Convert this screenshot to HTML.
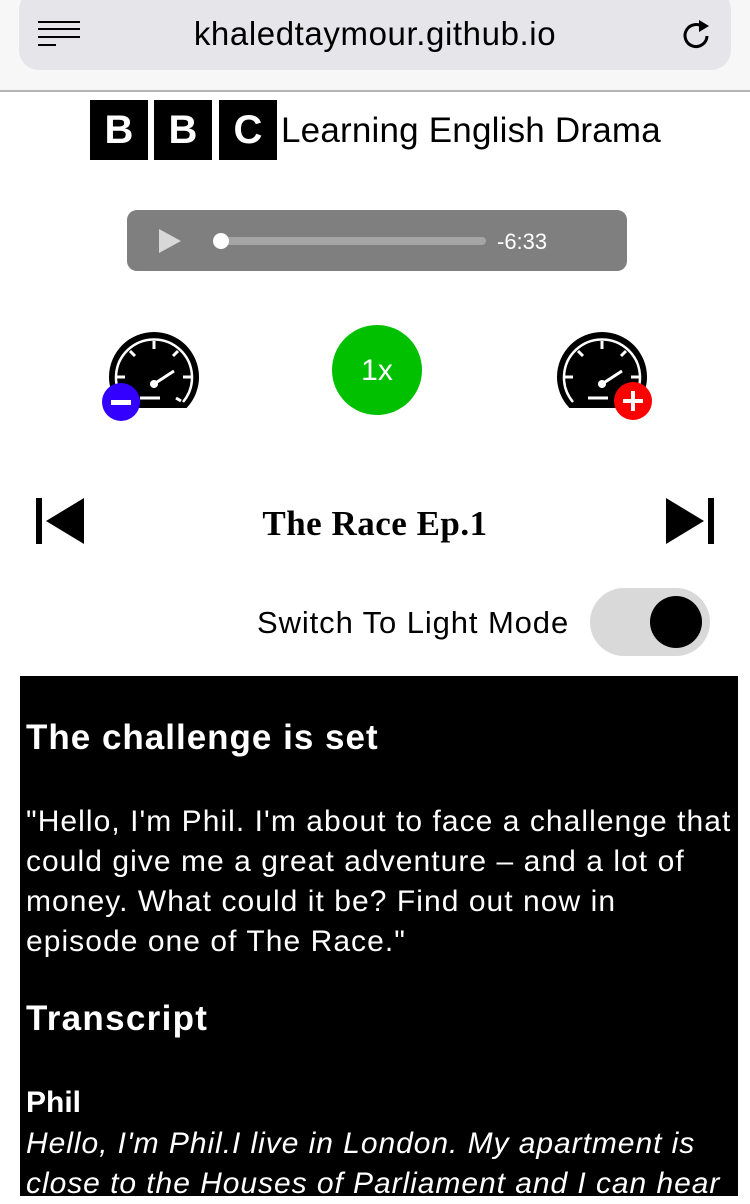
<!DOCTYPE html>
<html><head><meta charset="utf-8"><style>
body{margin:0;width:750px;height:1194px;overflow:hidden;background:#fff;font-family:"Liberation Sans",sans-serif;position:relative}
.a{position:absolute}
.bbc{background:#000;color:#fff;width:58px;height:60px;top:100px;font-size:40px;font-weight:bold;text-align:center;line-height:60px}
</style></head><body>
<div class="a" style="left:0;top:0;width:750px;height:90px;background:#f7f7f7;border-bottom:2px solid #b5b5b5"></div>
<div class="a" style="left:19px;top:-10px;width:712px;height:80px;background:#e5e5ea;border-radius:20px"></div>
<div class="a" style="left:38px;top:21px;width:42px;height:2px;background:#000;box-shadow:0 7px 0 #000,0 15px 0 #000"></div>
<div class="a" style="left:38px;top:44px;width:18px;height:2px;background:#000"></div>
<div class="a" style="left:0;width:750px;top:15px;text-align:center;font-size:33px;letter-spacing:0.6px;color:#000">khaledtaymour.github.io</div>
<svg class="a" style="left:680px;top:16px" width="34" height="36" viewBox="0 0 34 36"><path d="M24 12 A11 11 0 1 0 27 20" fill="none" stroke="#000" stroke-width="3"/><path d="M19 4 L29 10 L19 16Z" fill="#000"/></svg>
<div class="a bbc" style="left:90px">B</div>
<div class="a bbc" style="left:154px">B</div>
<div class="a bbc" style="left:219px">C</div>
<div class="a" style="left:281px;top:111px;font-size:35px;color:#000;letter-spacing:0.2px">Learning English Drama</div>
<div class="a" style="left:127px;top:210px;width:500px;height:61px;background:#7f7f7f;border-radius:10px"></div>
<svg class="a" style="left:157px;top:228px" width="26" height="26"><path d="M2 1 L24 13 L2 25Z" fill="#d8d8d8"/></svg>
<div class="a" style="left:220px;top:237px;width:266px;height:8px;background:#a5a5a5;border-radius:4px"></div>
<div class="a" style="left:213px;top:233px;width:16px;height:16px;background:#fff;border-radius:50%"></div>
<div class="a" style="left:497px;top:229px;font-size:22px;color:#fff">-6:33</div>
<svg class="a" style="left:100px;top:330px" width="560" height="92" viewBox="0 0 560 92">
<g id="g">
<path d="M21.4 78 A45 45 0 1 1 86.6 78 Z" fill="#000"/>
<path d="M25 72 A38 38 0 1 1 83 72" fill="none" stroke="#fff" stroke-width="2.5"/>
<g stroke="#fff" stroke-width="3" fill="none"><path d="M54 11 v8 M30 21 l5 5 M78 21 l-5 5 M17 47 h8 M91 47 h-8 M76 68 l5 3"/><path d="M54 54 L74 41"/></g>
<circle cx="54" cy="54" r="4" fill="#fff"/>
<path d="M40 68 h20" stroke="#fff" stroke-width="3"/>
</g>
<circle cx="21" cy="72" r="19" fill="#3300ff"/><rect x="11" y="70" width="20" height="5" fill="#fff"/>
<use href="#g" x="448"/>
<circle cx="533" cy="71" r="19" fill="#ff0000"/><rect x="523" y="69" width="20" height="4" fill="#fff"/><rect x="531" y="61" width="4" height="20" fill="#fff"/>
</svg>
<div class="a" style="left:332px;top:325px;width:90px;height:90px;border-radius:50%;background:#00c000;color:#fff;font-size:30px;text-align:center;line-height:92px">1x</div>
<svg class="a" style="left:34px;top:496px" width="52" height="50"><rect x="2" y="2" width="6" height="46" fill="#000"/><path d="M50 2 V48 L12 25Z" fill="#000"/></svg>
<svg class="a" style="left:664px;top:496px" width="52" height="50"><rect x="44" y="2" width="6" height="46" fill="#000"/><path d="M2 2 V48 L40 25Z" fill="#000"/></svg>
<div class="a" style="left:0;width:750px;top:504px;text-align:center;font-family:'Liberation Serif',serif;font-weight:bold;font-size:35px;letter-spacing:0.5px">The Race Ep.1</div>
<div class="a" style="left:257px;top:605px;font-size:31px;letter-spacing:0.9px;color:#000">Switch To Light Mode</div>
<div class="a" style="left:590px;top:588px;width:120px;height:68px;border-radius:34px;background:#d9d9d9"></div>
<div class="a" style="left:650px;top:596px;width:52px;height:52px;border-radius:50%;background:#000"></div>
<div class="a" style="left:20px;top:676px;width:718px;height:520px;background:#000;color:#fff">
<div style="position:absolute;left:6px;top:42px;font-size:35px;font-weight:bold;letter-spacing:1px">The challenge is set</div>
<div style="position:absolute;left:6px;top:126px;width:712px;font-size:30px;line-height:40px;letter-spacing:1.05px;white-space:nowrap">"Hello, I'm Phil. I'm about to face a challenge that<br>could give me a great adventure – and a lot of<br>money. What could it be? Find out now in<br>episode one of The Race."</div>
<div style="position:absolute;left:6px;top:323px;font-size:35px;font-weight:bold;letter-spacing:1.3px">Transcript</div>
<div style="position:absolute;left:6px;top:410px;font-size:30px;font-weight:bold">Phil</div>
<div style="position:absolute;left:6px;top:448px;width:712px;font-size:30px;line-height:40px;font-style:italic;white-space:nowrap;letter-spacing:0.95px">Hello, I'm Phil.I live in London. My apartment is<br>close to the Houses of Parliament and I can hear</div>
</div>
</body></html>
